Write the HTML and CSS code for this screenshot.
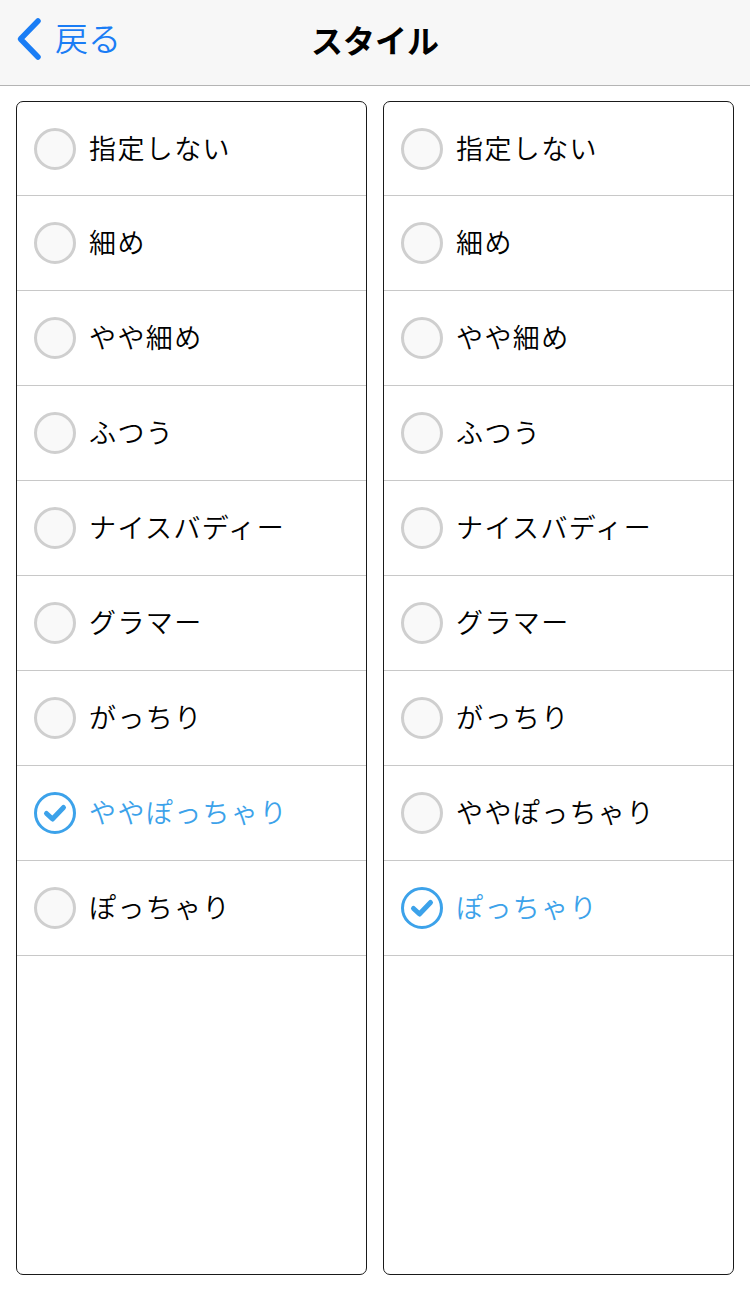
FILE: index.html
```html
<!DOCTYPE html>
<html lang="ja">
<head>
<meta charset="utf-8">
<link rel="stylesheet" href="styles.css">
</head>
<body>
<header class="navbar">
  <a class="back">
    <svg class="chev" width="28" height="44" viewBox="0 0 28 44"><path d="M23 4 L5.5 22 L23 40" fill="none" stroke="#1a7df5" stroke-width="5.5" stroke-linecap="round" stroke-linejoin="round"/></svg>
    <span class="back-label">戻る</span>
  </a>
  <h1 class="title">スタイル</h1>
</header>
<main class="columns">
  <ul class="panel">
    <li class="row"><span class="radio"></span><span class="label">指定しない</span></li>
    <li class="row"><span class="radio"></span><span class="label">細め</span></li>
    <li class="row"><span class="radio"></span><span class="label">やや細め</span></li>
    <li class="row"><span class="radio"></span><span class="label">ふつう</span></li>
    <li class="row"><span class="radio"></span><span class="label">ナイスバディー</span></li>
    <li class="row"><span class="radio"></span><span class="label">グラマー</span></li>
    <li class="row"><span class="radio"></span><span class="label">がっちり</span></li>
    <li class="row selected"><span class="radio checked"><svg width="42" height="42" viewBox="0 0 42 42"><circle cx="21" cy="21" r="19.5" fill="none" stroke="#3ca2ea" stroke-width="3"/><path d="M12.5 21.5 L18.5 27 L29.5 15.5" fill="none" stroke="#3ca2ea" stroke-width="5" stroke-linecap="round" stroke-linejoin="round"/></svg></span><span class="label">ややぽっちゃり</span></li>
    <li class="row"><span class="radio"></span><span class="label">ぽっちゃり</span></li>
  </ul>
  <ul class="panel">
    <li class="row"><span class="radio"></span><span class="label">指定しない</span></li>
    <li class="row"><span class="radio"></span><span class="label">細め</span></li>
    <li class="row"><span class="radio"></span><span class="label">やや細め</span></li>
    <li class="row"><span class="radio"></span><span class="label">ふつう</span></li>
    <li class="row"><span class="radio"></span><span class="label">ナイスバディー</span></li>
    <li class="row"><span class="radio"></span><span class="label">グラマー</span></li>
    <li class="row"><span class="radio"></span><span class="label">がっちり</span></li>
    <li class="row"><span class="radio"></span><span class="label">ややぽっちゃり</span></li>
    <li class="row selected"><span class="radio checked"><svg width="42" height="42" viewBox="0 0 42 42"><circle cx="21" cy="21" r="19.5" fill="none" stroke="#3ca2ea" stroke-width="3"/><path d="M12.5 21.5 L18.5 27 L29.5 15.5" fill="none" stroke="#3ca2ea" stroke-width="5" stroke-linecap="round" stroke-linejoin="round"/></svg></span><span class="label">ぽっちゃり</span></li>
  </ul>
</main>
</body>
</html>
```
FILE: styles.css
```css
* { box-sizing: border-box; }
html, body { margin: 0; padding: 0; }
body {
  width: 750px;
  height: 1291px;
  background: #fff;
  font-family: "Noto Sans CJK JP", "Noto Sans", sans-serif;
  color: #000;
  overflow: hidden;
}
.navbar {
  height: 86px;
  background: #f7f7f7;
  border-bottom: 1px solid #b4b4b4;
  position: relative;
  display: flex;
  align-items: center;
  justify-content: center;
}
.back {
  position: absolute;
  left: 15px;
  top: 17px;
  display: flex;
  align-items: center;
  gap: 12px;
  color: #1a7df5;
}
.chev { display: block; }
.back-label {
  font-size: 33px;
  font-weight: 350;
  line-height: 44px;
  margin-top: -4px;
}
.title {
  margin: 0;
  font-size: 32px;
  font-weight: 700;
  line-height: 44px;
  margin-top: -8px;
}
.columns {
  display: flex;
  gap: 16px;
  padding: 15px 16px 0 16px;
}
.panel {
  list-style: none;
  margin: 0;
  padding: 0;
  flex: 1;
  height: 1174px;
  border: 1px solid #1a1a1a;
  border-radius: 7px;
  overflow: hidden;
}
.row {
  height: 95px;
  border-bottom: 1px solid #c8c8c8;
  display: flex;
  align-items: center;
  padding-left: 17px;
  gap: 13px;
}
.row:first-child { height: 94px; }
.radio {
  width: 42px;
  height: 42px;
  border-radius: 50%;
  border: 3px solid #cfcfcf;
  background: #f9f9f9;
  flex: none;
}
.radio.checked {
  border: none;
  background: #fff;
}
.radio svg { display: block; }
.label {
  font-size: 27px;
  font-weight: 350;
  letter-spacing: 1.4px;
  line-height: 36px;
  margin-top: -2px;
}
.selected .label { color: #3ca2ea; }
```
